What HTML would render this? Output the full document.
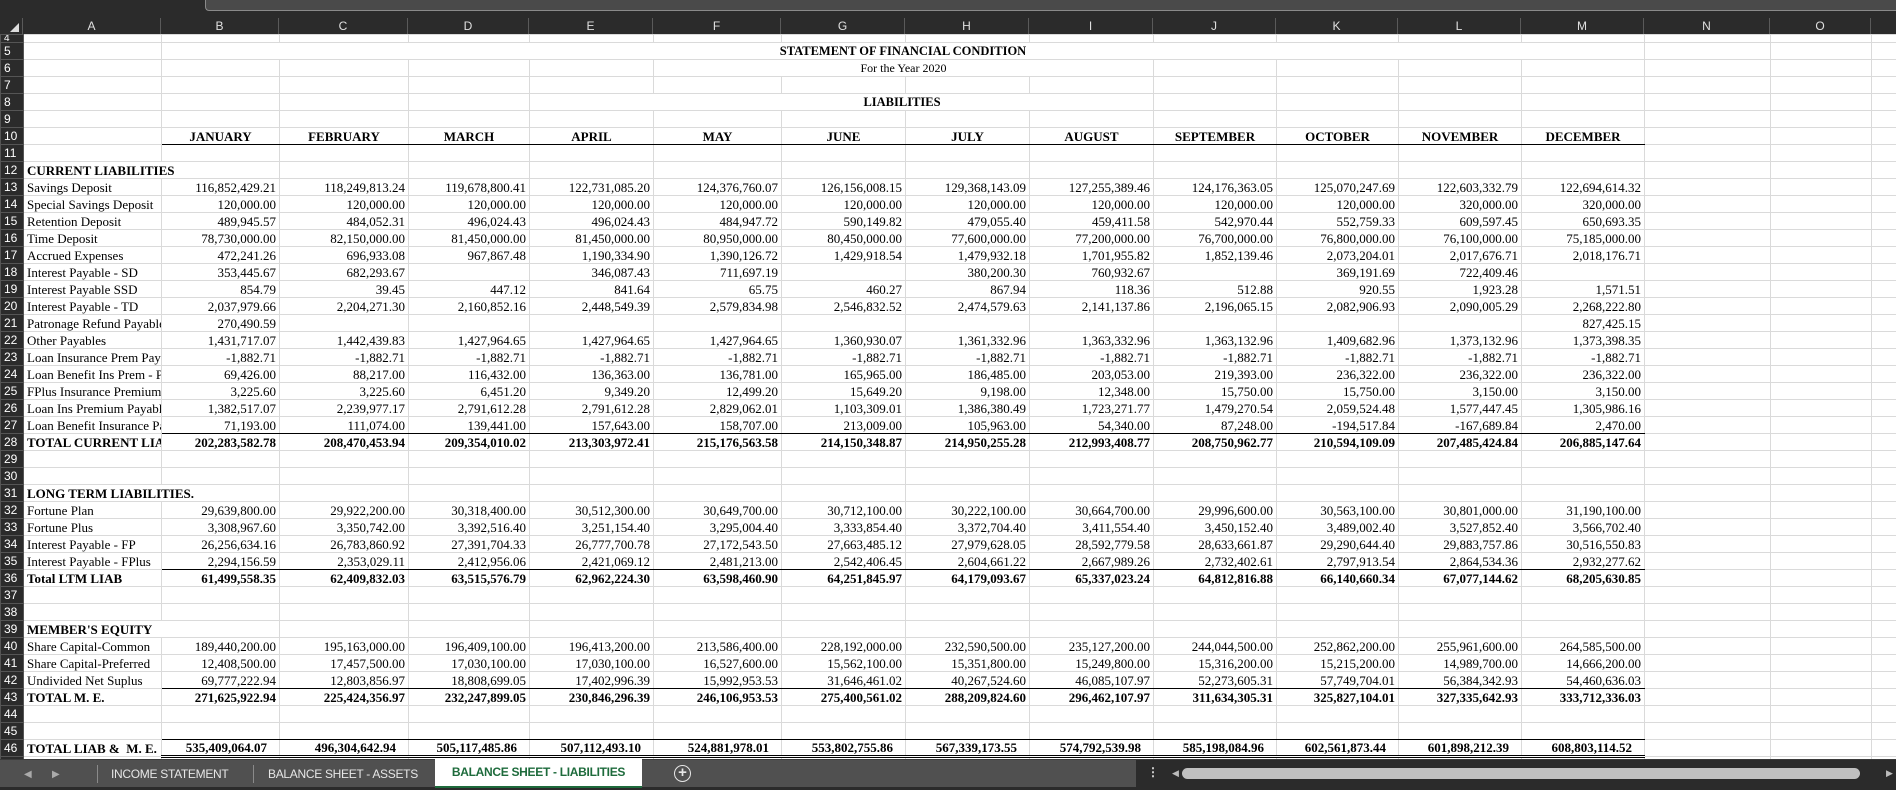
<!DOCTYPE html>
<html><head><meta charset="utf-8"><style>
*{margin:0;padding:0;box-sizing:border-box}
body{width:1896px;height:790px;overflow:hidden;background:#fff;position:relative;font-family:"Liberation Serif",serif}
#top{position:absolute;left:0;top:0;width:1896px;height:18px;background:#2b2b2b}
#top div{position:absolute;left:205px;top:0;right:0;height:11px;background:#4a4a4a;border-bottom:1px solid #8a8a8a;border-left:1px solid #8a8a8a;border-bottom-left-radius:4px}
#hdr{position:absolute;left:0;top:18px;height:16px;width:1896px;background:#2b2b2b;display:flex}
#hdr div{height:16px;border-right:1px solid #5a5a5a;color:#e0e0e0;font:12px "Liberation Sans",sans-serif;text-align:center;line-height:16px}
#sheet{position:absolute;left:0;top:34px;width:1896px;height:725px;overflow:hidden}
table{border-collapse:collapse;table-layout:fixed;width:1896px}
td,th{height:17px;border:1px solid #dadada;white-space:nowrap;overflow:hidden;font-size:13px;line-height:15px;padding:0 3px;text-align:right;color:#000}
th{background:#2b2b2b;color:#fff;font:12px "Liberation Sans",sans-serif;text-align:left;padding-left:3px;border-color:#555}
tr.r4 td,tr.r4 th{height:8px;line-height:6px;font-size:10px}
td.l{text-align:left}
td.c{text-align:center}
tr.b td{font-weight:bold}
tr.u td.n{border-bottom:1px solid #000}
tr.t td{font-weight:bold}
tr.dd td.n{border-bottom:3px double #000;padding-right:12px}
#tabs{position:absolute;left:0;top:759px;width:1896px;height:31px;background:#505050;border-top:1px solid #3a3a3a;border-bottom:3px solid #2b2b2b;font:12px "Liberation Sans",sans-serif;color:#e6e6e6;letter-spacing:-0.3px}
#tabs span{position:absolute;top:7px}
.sep{position:absolute;top:5px;width:1px;height:18px;background:#8a8a8a}
#act{position:absolute;left:435px;top:-1px;width:207px;height:29px;background:#fff;color:#1e6b3c;font-weight:bold;text-align:center;line-height:27px;border-bottom:2px solid #1e6b3c}
#scr{position:absolute;left:1136px;top:0;right:0;height:28px;background:#2b2b2b}
#thumb{position:absolute;left:1182px;top:8px;width:680px;height:11px;background:#c0c0c0;border-radius:6px}
</style></head><body>
<div id="top"><div></div></div>
<div id="hdr">
<div style="width:23px;position:relative"><span style="position:absolute;right:3px;bottom:2px;width:0;height:0;border-left:9px solid transparent;border-bottom:9px solid #ddd"></span></div>
<div style="width:138px">A</div><div style="width:118px">B</div><div style="width:129px">C</div><div style="width:121px">D</div><div style="width:124px">E</div><div style="width:128px">F</div><div style="width:124px">G</div><div style="width:124px">H</div><div style="width:124px">I</div><div style="width:123px">J</div><div style="width:122px">K</div><div style="width:123px">L</div><div style="width:123px">M</div><div style="width:126px">N</div><div style="width:101px">O</div><div style="width:25px;border:none"></div>
</div>
<div id="sheet"><table>
<colgroup><col style="width:23px"><col style="width:138px"><col style="width:118px"><col style="width:129px"><col style="width:121px"><col style="width:124px"><col style="width:128px"><col style="width:124px"><col style="width:124px"><col style="width:124px"><col style="width:123px"><col style="width:122px"><col style="width:123px"><col style="width:123px"><col style="width:126px"><col style="width:101px"><col style="width:25px"></colgroup>
<tr class="r4"><th>4</th><td></td><td></td><td></td><td></td><td></td><td></td><td></td><td></td><td></td><td></td><td></td><td></td><td></td><td></td><td></td><td></td></tr>
<tr><th>5</th><td></td><td colspan="12" class="c" style="font-weight:bold;font-size:12.5px">STATEMENT OF FINANCIAL CONDITION</td><td></td><td></td><td></td></tr>
<tr><th>6</th><td></td><td></td><td></td><td></td><td></td><td colspan="4" class="c" style="font-size:12px">For the Year 2020</td><td></td><td></td><td></td><td></td><td></td><td></td><td></td></tr>
<tr><th>7</th><td></td><td></td><td></td><td></td><td></td><td></td><td></td><td></td><td></td><td></td><td></td><td></td><td></td><td></td><td></td><td></td></tr>
<tr><th>8</th><td></td><td></td><td></td><td></td><td colspan="5" class="c" style="font-weight:bold;font-size:12.5px;padding-left:124px">LIABILITIES</td><td></td><td></td><td></td><td></td><td></td><td></td><td></td></tr>
<tr><th>9</th><td></td><td></td><td></td><td></td><td></td><td></td><td></td><td></td><td></td><td></td><td></td><td></td><td></td><td></td><td></td><td></td></tr>
<tr class="u b"><th>10</th><td></td><td class="n c">JANUARY</td><td class="n c">FEBRUARY</td><td class="n c">MARCH</td><td class="n c">APRIL</td><td class="n c">MAY</td><td class="n c">JUNE</td><td class="n c">JULY</td><td class="n c">AUGUST</td><td class="n c">SEPTEMBER</td><td class="n c">OCTOBER</td><td class="n c">NOVEMBER</td><td class="n c">DECEMBER</td><td></td><td></td><td></td></tr>
<tr><th>11</th><td></td><td></td><td></td><td></td><td></td><td></td><td></td><td></td><td></td><td></td><td></td><td></td><td></td><td></td><td></td><td></td></tr>
<tr><th>12</th><td colspan="2" class="l" style="font-weight:bold">CURRENT LIABILITIES</td><td></td><td></td><td></td><td></td><td></td><td></td><td></td><td></td><td></td><td></td><td></td><td></td><td></td><td></td></tr>
<tr><th>13</th><td class="l">Savings Deposit</td><td>116,852,429.21</td><td>118,249,813.24</td><td>119,678,800.41</td><td>122,731,085.20</td><td>124,376,760.07</td><td>126,156,008.15</td><td>129,368,143.09</td><td>127,255,389.46</td><td>124,176,363.05</td><td>125,070,247.69</td><td>122,603,332.79</td><td>122,694,614.32</td><td></td><td></td><td></td></tr>
<tr><th>14</th><td class="l">Special Savings Deposit</td><td>120,000.00</td><td>120,000.00</td><td>120,000.00</td><td>120,000.00</td><td>120,000.00</td><td>120,000.00</td><td>120,000.00</td><td>120,000.00</td><td>120,000.00</td><td>120,000.00</td><td>320,000.00</td><td>320,000.00</td><td></td><td></td><td></td></tr>
<tr><th>15</th><td class="l">Retention Deposit</td><td>489,945.57</td><td>484,052.31</td><td>496,024.43</td><td>496,024.43</td><td>484,947.72</td><td>590,149.82</td><td>479,055.40</td><td>459,411.58</td><td>542,970.44</td><td>552,759.33</td><td>609,597.45</td><td>650,693.35</td><td></td><td></td><td></td></tr>
<tr><th>16</th><td class="l">Time Deposit</td><td>78,730,000.00</td><td>82,150,000.00</td><td>81,450,000.00</td><td>81,450,000.00</td><td>80,950,000.00</td><td>80,450,000.00</td><td>77,600,000.00</td><td>77,200,000.00</td><td>76,700,000.00</td><td>76,800,000.00</td><td>76,100,000.00</td><td>75,185,000.00</td><td></td><td></td><td></td></tr>
<tr><th>17</th><td class="l">Accrued Expenses</td><td>472,241.26</td><td>696,933.08</td><td>967,867.48</td><td>1,190,334.90</td><td>1,390,126.72</td><td>1,429,918.54</td><td>1,479,932.18</td><td>1,701,955.82</td><td>1,852,139.46</td><td>2,073,204.01</td><td>2,017,676.71</td><td>2,018,176.71</td><td></td><td></td><td></td></tr>
<tr><th>18</th><td class="l">Interest Payable - SD</td><td>353,445.67</td><td>682,293.67</td><td></td><td>346,087.43</td><td>711,697.19</td><td></td><td>380,200.30</td><td>760,932.67</td><td></td><td>369,191.69</td><td>722,409.46</td><td></td><td></td><td></td><td></td></tr>
<tr><th>19</th><td class="l">Interest Payable SSD</td><td>854.79</td><td>39.45</td><td>447.12</td><td>841.64</td><td>65.75</td><td>460.27</td><td>867.94</td><td>118.36</td><td>512.88</td><td>920.55</td><td>1,923.28</td><td>1,571.51</td><td></td><td></td><td></td></tr>
<tr><th>20</th><td class="l">Interest Payable - TD</td><td>2,037,979.66</td><td>2,204,271.30</td><td>2,160,852.16</td><td>2,448,549.39</td><td>2,579,834.98</td><td>2,546,832.52</td><td>2,474,579.63</td><td>2,141,137.86</td><td>2,196,065.15</td><td>2,082,906.93</td><td>2,090,005.29</td><td>2,268,222.80</td><td></td><td></td><td></td></tr>
<tr><th>21</th><td class="l">Patronage Refund Payable</td><td>270,490.59</td><td></td><td></td><td></td><td></td><td></td><td></td><td></td><td></td><td></td><td></td><td>827,425.15</td><td></td><td></td><td></td></tr>
<tr><th>22</th><td class="l">Other Payables</td><td>1,431,717.07</td><td>1,442,439.83</td><td>1,427,964.65</td><td>1,427,964.65</td><td>1,427,964.65</td><td>1,360,930.07</td><td>1,361,332.96</td><td>1,363,332.96</td><td>1,363,132.96</td><td>1,409,682.96</td><td>1,373,132.96</td><td>1,373,398.35</td><td></td><td></td><td></td></tr>
<tr><th>23</th><td class="l">Loan Insurance Prem Payable</td><td>-1,882.71</td><td>-1,882.71</td><td>-1,882.71</td><td>-1,882.71</td><td>-1,882.71</td><td>-1,882.71</td><td>-1,882.71</td><td>-1,882.71</td><td>-1,882.71</td><td>-1,882.71</td><td>-1,882.71</td><td>-1,882.71</td><td></td><td></td><td></td></tr>
<tr><th>24</th><td class="l">Loan Benefit Ins Prem - Payable</td><td>69,426.00</td><td>88,217.00</td><td>116,432.00</td><td>136,363.00</td><td>136,781.00</td><td>165,965.00</td><td>186,485.00</td><td>203,053.00</td><td>219,393.00</td><td>236,322.00</td><td>236,322.00</td><td>236,322.00</td><td></td><td></td><td></td></tr>
<tr><th>25</th><td class="l">FPlus Insurance Premium</td><td>3,225.60</td><td>3,225.60</td><td>6,451.20</td><td>9,349.20</td><td>12,499.20</td><td>15,649.20</td><td>9,198.00</td><td>12,348.00</td><td>15,750.00</td><td>15,750.00</td><td>3,150.00</td><td>3,150.00</td><td></td><td></td><td></td></tr>
<tr><th>26</th><td class="l">Loan Ins Premium Payable</td><td>1,382,517.07</td><td>2,239,977.17</td><td>2,791,612.28</td><td>2,791,612.28</td><td>2,829,062.01</td><td>1,103,309.01</td><td>1,386,380.49</td><td>1,723,271.77</td><td>1,479,270.54</td><td>2,059,524.48</td><td>1,577,447.45</td><td>1,305,986.16</td><td></td><td></td><td></td></tr>
<tr class="u"><th>27</th><td class="l">Loan Benefit Insurance Payable</td><td class="n">71,193.00</td><td class="n">111,074.00</td><td class="n">139,441.00</td><td class="n">157,643.00</td><td class="n">158,707.00</td><td class="n">213,009.00</td><td class="n">105,963.00</td><td class="n">54,340.00</td><td class="n">87,248.00</td><td class="n">-194,517.84</td><td class="n">-167,689.84</td><td class="n">2,470.00</td><td></td><td></td><td></td></tr>
<tr class="t"><th>28</th><td class="l">TOTAL CURRENT LIABILITIES</td><td>202,283,582.78</td><td>208,470,453.94</td><td>209,354,010.02</td><td>213,303,972.41</td><td>215,176,563.58</td><td>214,150,348.87</td><td>214,950,255.28</td><td>212,993,408.77</td><td>208,750,962.77</td><td>210,594,109.09</td><td>207,485,424.84</td><td>206,885,147.64</td><td></td><td></td><td></td></tr>
<tr><th>29</th><td></td><td></td><td></td><td></td><td></td><td></td><td></td><td></td><td></td><td></td><td></td><td></td><td></td><td></td><td></td><td></td></tr>
<tr><th>30</th><td></td><td></td><td></td><td></td><td></td><td></td><td></td><td></td><td></td><td></td><td></td><td></td><td></td><td></td><td></td><td></td></tr>
<tr><th>31</th><td colspan="2" class="l" style="font-weight:bold">LONG TERM LIABILITIES.</td><td></td><td></td><td></td><td></td><td></td><td></td><td></td><td></td><td></td><td></td><td></td><td></td><td></td><td></td></tr>
<tr><th>32</th><td class="l">Fortune Plan</td><td>29,639,800.00</td><td>29,922,200.00</td><td>30,318,400.00</td><td>30,512,300.00</td><td>30,649,700.00</td><td>30,712,100.00</td><td>30,222,100.00</td><td>30,664,700.00</td><td>29,996,600.00</td><td>30,563,100.00</td><td>30,801,000.00</td><td>31,190,100.00</td><td></td><td></td><td></td></tr>
<tr><th>33</th><td class="l">Fortune Plus</td><td>3,308,967.60</td><td>3,350,742.00</td><td>3,392,516.40</td><td>3,251,154.40</td><td>3,295,004.40</td><td>3,333,854.40</td><td>3,372,704.40</td><td>3,411,554.40</td><td>3,450,152.40</td><td>3,489,002.40</td><td>3,527,852.40</td><td>3,566,702.40</td><td></td><td></td><td></td></tr>
<tr><th>34</th><td class="l">Interest Payable - FP</td><td>26,256,634.16</td><td>26,783,860.92</td><td>27,391,704.33</td><td>26,777,700.78</td><td>27,172,543.50</td><td>27,663,485.12</td><td>27,979,628.05</td><td>28,592,779.58</td><td>28,633,661.87</td><td>29,290,644.40</td><td>29,883,757.86</td><td>30,516,550.83</td><td></td><td></td><td></td></tr>
<tr class="u"><th>35</th><td class="l">Interest Payable - FPlus</td><td class="n">2,294,156.59</td><td class="n">2,353,029.11</td><td class="n">2,412,956.06</td><td class="n">2,421,069.12</td><td class="n">2,481,213.00</td><td class="n">2,542,406.45</td><td class="n">2,604,661.22</td><td class="n">2,667,989.26</td><td class="n">2,732,402.61</td><td class="n">2,797,913.54</td><td class="n">2,864,534.36</td><td class="n">2,932,277.62</td><td></td><td></td><td></td></tr>
<tr class="t"><th>36</th><td class="l">Total LTM LIAB</td><td>61,499,558.35</td><td>62,409,832.03</td><td>63,515,576.79</td><td>62,962,224.30</td><td>63,598,460.90</td><td>64,251,845.97</td><td>64,179,093.67</td><td>65,337,023.24</td><td>64,812,816.88</td><td>66,140,660.34</td><td>67,077,144.62</td><td>68,205,630.85</td><td></td><td></td><td></td></tr>
<tr><th>37</th><td></td><td></td><td></td><td></td><td></td><td></td><td></td><td></td><td></td><td></td><td></td><td></td><td></td><td></td><td></td><td></td></tr>
<tr><th>38</th><td></td><td></td><td></td><td></td><td></td><td></td><td></td><td></td><td></td><td></td><td></td><td></td><td></td><td></td><td></td><td></td></tr>
<tr><th>39</th><td colspan="2" class="l" style="font-weight:bold">MEMBER'S EQUITY</td><td></td><td></td><td></td><td></td><td></td><td></td><td></td><td></td><td></td><td></td><td></td><td></td><td></td><td></td></tr>
<tr><th>40</th><td class="l">Share Capital-Common</td><td>189,440,200.00</td><td>195,163,000.00</td><td>196,409,100.00</td><td>196,413,200.00</td><td>213,586,400.00</td><td>228,192,000.00</td><td>232,590,500.00</td><td>235,127,200.00</td><td>244,044,500.00</td><td>252,862,200.00</td><td>255,961,600.00</td><td>264,585,500.00</td><td></td><td></td><td></td></tr>
<tr><th>41</th><td class="l">Share Capital-Preferred</td><td>12,408,500.00</td><td>17,457,500.00</td><td>17,030,100.00</td><td>17,030,100.00</td><td>16,527,600.00</td><td>15,562,100.00</td><td>15,351,800.00</td><td>15,249,800.00</td><td>15,316,200.00</td><td>15,215,200.00</td><td>14,989,700.00</td><td>14,666,200.00</td><td></td><td></td><td></td></tr>
<tr class="u"><th>42</th><td class="l">Undivided Net Suplus</td><td class="n">69,777,222.94</td><td class="n">12,803,856.97</td><td class="n">18,808,699.05</td><td class="n">17,402,996.39</td><td class="n">15,992,953.53</td><td class="n">31,646,461.02</td><td class="n">40,267,524.60</td><td class="n">46,085,107.97</td><td class="n">52,273,605.31</td><td class="n">57,749,704.01</td><td class="n">56,384,342.93</td><td class="n">54,460,636.03</td><td></td><td></td><td></td></tr>
<tr class="t"><th>43</th><td class="l">TOTAL M. E.</td><td>271,625,922.94</td><td>225,424,356.97</td><td>232,247,899.05</td><td>230,846,296.39</td><td>246,106,953.53</td><td>275,400,561.02</td><td>288,209,824.60</td><td>296,462,107.97</td><td>311,634,305.31</td><td>325,827,104.01</td><td>327,335,642.93</td><td>333,712,336.03</td><td></td><td></td><td></td></tr>
<tr><th>44</th><td></td><td></td><td></td><td></td><td></td><td></td><td></td><td></td><td></td><td></td><td></td><td></td><td></td><td></td><td></td><td></td></tr>
<tr class="u"><th>45</th><td></td><td class="n"></td><td class="n"></td><td class="n"></td><td class="n"></td><td class="n"></td><td class="n"></td><td class="n"></td><td class="n"></td><td class="n"></td><td class="n"></td><td class="n"></td><td class="n"></td><td></td><td></td><td></td></tr>
<tr class="t dd"><th>46</th><td class="l">TOTAL LIAB &amp;&nbsp; M. E.</td><td class="n">535,409,064.07</td><td class="n">496,304,642.94</td><td class="n">505,117,485.86</td><td class="n">507,112,493.10</td><td class="n">524,881,978.01</td><td class="n">553,802,755.86</td><td class="n">567,339,173.55</td><td class="n">574,792,539.98</td><td class="n">585,198,084.96</td><td class="n">602,561,873.44</td><td class="n">601,898,212.39</td><td class="n">608,803,114.52</td><td></td><td></td><td></td></tr>
<tr><th>47</th><td></td><td></td><td></td><td></td><td></td><td></td><td></td><td></td><td></td><td></td><td></td><td></td><td></td><td></td><td></td><td></td></tr>
</table></div>
<div id="tabs">
<span style="left:24px;color:#aaa;font-size:10px;top:9px">&#9664;</span><span style="left:52px;color:#aaa;font-size:10px;top:9px">&#9654;</span>
<div class="sep" style="left:97px"></div>
<span style="left:111px">INCOME STATEMENT</span>
<div class="sep" style="left:253px"></div>
<span style="left:268px">BALANCE SHEET - ASSETS</span>
<div id="act">BALANCE SHEET - LIABILITIES</div>
<span style="left:674px;top:5px;width:17px;height:17px;border:1.5px solid #e6e6e6;border-radius:50%;text-align:center;line-height:14px;font-size:15px;font-weight:bold;letter-spacing:0">+</span>
<div id="scr"><span style="left:11px;top:5px;color:#ddd;font-weight:bold">&#8942;</span><span style="left:36px;top:8px;font-size:9px;color:#bbb">&#9664;</span><div id="thumb" style="left:46px;width:678px"></div><span style="left:750px;top:8px;font-size:9px;color:#bbb">&#9654;</span></div>
</div>
</body></html>
